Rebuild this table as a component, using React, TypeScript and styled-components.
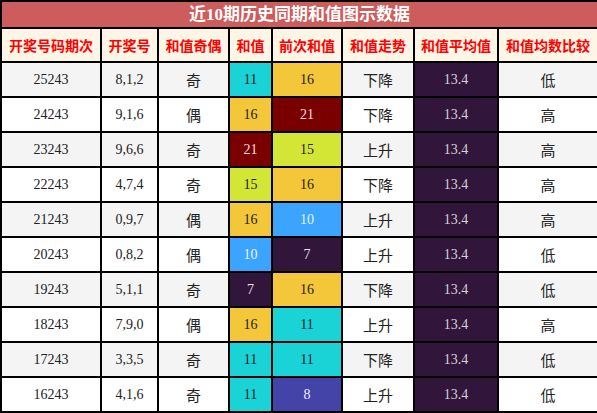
import styled, { createGlobalStyle } from 'styled-components';

const GlobalStyle = createGlobalStyle`
  body {
    margin: 0;
    background: #fff;
    font-family: "Liberation Serif", "Noto Sans CJK SC", serif;
  }
`;

const Table = styled.table`
  width: 597px;
  border-collapse: collapse;
  table-layout: fixed;
  border: 2px solid #000;

  & td,
  & th {
    border: 2px solid #000;
    text-align: center;
    padding: 0;
  }
`;

const Title = styled.th`
  height: 25px;
  background: #cd5c5c;
  color: #fff;
  font-size: 17px;
  font-weight: bold;
  line-height: 25px;
`;

const HeadCell = styled.th`
  height: 32px;
  background: #fdf5e6;
  color: #f00;
  font-size: 14px;
  font-weight: bold;
`;

const Row = styled.tr<{ $odd: boolean }>`
  height: 35px;
  background: ${(p) => (p.$odd ? '#f4f4f4' : '#fff')};
`;

const Cell = styled.td`
  font-size: 14px;
  color: #222;
`;

const Word = styled.td`
  font-size: 15px;
  color: #222;
`;

const Swatch = styled.td<{ $bg: string; $fg: string }>`
  font-size: 14px;
  background: ${(p) => p.$bg};
  color: ${(p) => p.$fg};
`;

const palette: Record<number, [string, string]> = {
  7: ['#31153a', '#e8e0ee'],
  8: ['#4343a8', '#eeeeff'],
  10: ['#3ba4ff', '#e9f4ff'],
  11: ['#1ad3d6', '#222'],
  15: ['#d4e635', '#222'],
  16: ['#f4c63a', '#222'],
  21: ['#7a0000', '#f2dede'],
};

const rows = [
  ['25243', '8,1,2', '奇', 11, 16, '下降', '低'],
  ['24243', '9,1,6', '偶', 16, 21, '下降', '高'],
  ['23243', '9,6,6', '奇', 21, 15, '上升', '高'],
  ['22243', '4,7,4', '奇', 15, 16, '下降', '高'],
  ['21243', '0,9,7', '偶', 16, 10, '上升', '高'],
  ['20243', '0,8,2', '偶', 10, 7, '上升', '低'],
  ['19243', '5,1,1', '奇', 7, 16, '下降', '低'],
  ['18243', '7,9,0', '偶', 16, 11, '上升', '高'],
  ['17243', '3,3,5', '奇', 11, 11, '下降', '低'],
  ['16243', '4,1,6', '奇', 11, 8, '上升', '低'],
] as const;

const widths = [100, 57, 71, 43, 70, 72, 84, 100];
const heads = ['开奖号码期次', '开奖号', '和值奇偶', '和值', '前次和值', '和值走势', '和值平均值', '和值均数比较'];

const App = () => {
  return (
    <>
      <GlobalStyle />
      <Table>
        <colgroup>
          {widths.map((w, i) => (
            <col key={i} style={{ width: w }} />
          ))}
        </colgroup>
        <thead>
          <tr>
            <Title colSpan={8}>近10期历史同期和值图示数据</Title>
          </tr>
          <tr>
            {heads.map((h) => (
              <HeadCell key={h}>{h}</HeadCell>
            ))}
          </tr>
        </thead>
        <tbody>
          {rows.map((r, i) => {
            const [issue, nums, parity, sum, prev, trend, cmp] = r;
            return (
              <Row key={issue} $odd={i % 2 === 0}>
                <Cell>{issue}</Cell>
                <Cell>{nums}</Cell>
                <Word>{parity}</Word>
                <Swatch $bg={palette[sum][0]} $fg={palette[sum][1]}>{sum}</Swatch>
                <Swatch $bg={palette[prev][0]} $fg={palette[prev][1]}>{prev}</Swatch>
                <Word>{trend}</Word>
                <Swatch $bg="#31153a" $fg="#d8d0dc">13.4</Swatch>
                <Word>{cmp}</Word>
              </Row>
            );
          })}
        </tbody>
      </Table>
    </>
  );
};

export default App;
